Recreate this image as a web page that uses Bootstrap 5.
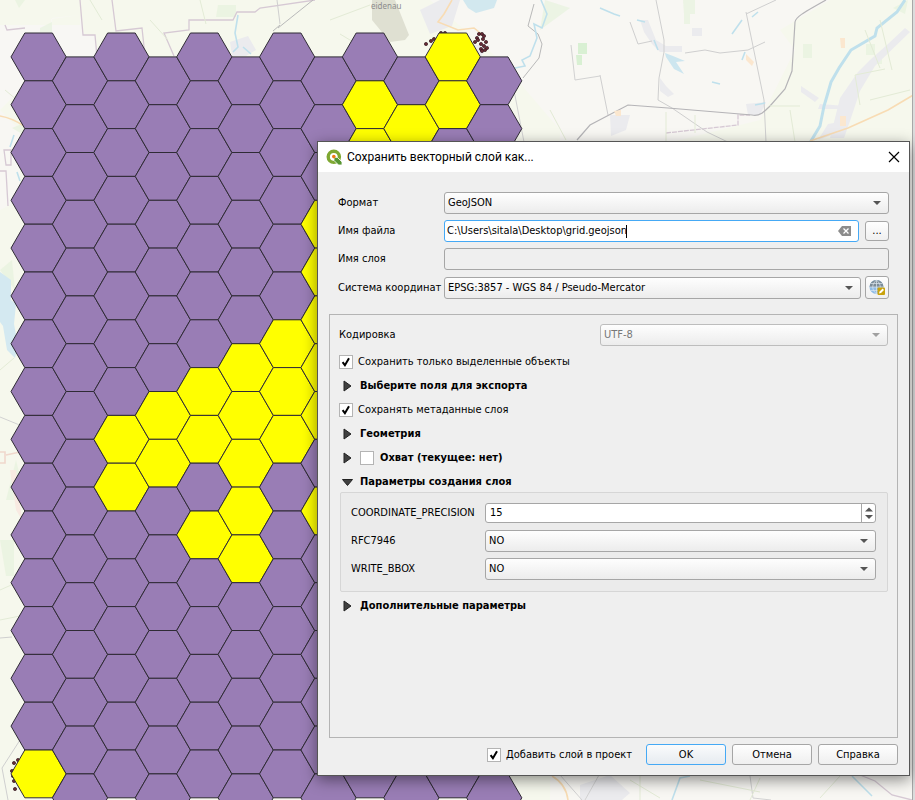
<!DOCTYPE html>
<html lang="ru">
<head>
<meta charset="utf-8">
<meta name="viewport" content="width=device-width, initial-scale=1">
<title>Сохранить векторный слой как...</title>
<link href="https://cdn.jsdelivr.net/npm/bootstrap@5.3.0/dist/css/bootstrap.min.css" rel="stylesheet">
<style>
  :root { --arrow: url("data:image/svg+xml,%3Csvg xmlns='http://www.w3.org/2000/svg' width='8' height='4'%3E%3Cpath d='M0 0h8L4 4z' fill='%23555'/%3E%3C/svg%3E"); }
  body { font-family: "DejaVu Sans Condensed", "DejaVu Sans", sans-serif; font-size: 11px; line-height: 16px; color: #000; background: #f8f7f3; }
  .desk { min-height: 100vh; }
  .map-canvas { position: absolute; inset: 0; width: 100%; height: 100%; }
  .map-edge { position: absolute; top: 0; right: 0; bottom: 0; width: 3px; background: #dcdcdc; border-left: 1px solid #a8a8a8; }
  .dialog { position: absolute; left: 317px; right: 5px; top: 141px; min-height: 635px; background: #efefef; border: 1px solid #555; box-shadow: 0 4px 14px rgba(0,0,0,.45); }
  .titlebar { height: 30px; background: #fff; font-family: Roboto, sans-serif; font-size: 12px; padding: 0 9px 0 8px; }
  .close-x { width: 12px; height: 12px; line-height: 0; }
  .form-zone { padding: 20px 20px 15px 20px; row-gap: 6px; }
  .lab { flex: 0 0 106px; }
  .plab { flex: 0 0 134px; }
  .ctl { height: 22px; min-height: 22px; padding: 2px 3px; font-size: 11px; line-height: 16px; color: #000; border: 1px solid #a6a6a6; border-radius: 3px; }
  .ctl:focus { box-shadow: none; }
  .form-select.ctl { background: var(--arrow) no-repeat right 7px center / 8px 4px, linear-gradient(#fefefe, #ececec); }
  .form-select.ctl:disabled { color: #777; opacity: 1; border-color: #bdbdbd; --arrow: url("data:image/svg+xml,%3Csvg xmlns='http://www.w3.org/2000/svg' width='8' height='4'%3E%3Cpath d='M0 0h8L4 4z' fill='%23a0a0a0'/%3E%3C/svg%3E"); }
  .form-control.ctl:disabled { background: #efefef; }
  .file-box { height: 22px; background: #fff; border: 1px solid #45a9f5; border-radius: 3px; padding: 0 7px 0 2px; }
  .file-box input { width: 179px; padding: 0; border: 0; outline: 0; font-size: 11px; line-height: 16px; background: none; }
  .caret { width: 1px; height: 13px; background: #000; }
  .tool { width: 24px; height: 23px; padding: 0; border: 1px solid #a6a6a6; border-radius: 3px; background: linear-gradient(#fefefe, #f0f0f0); font-size: 11px; line-height: 16px; }
  .tool-s { height: 20px; margin-left: 6px; }
  .group { margin: 0 11px; padding: 9px; border: 1px solid #b4b4b4; min-height: 423px; }
  .enc { width: 288px; }
  .fcheck { height: 24px; gap: 5px; }
  .fcheck .form-check-input, .fold .form-check-input { width: 14px; height: 14px; margin: 0; border: 1px solid #b4b4b4; border-radius: 0; background-color: #fff; box-shadow: none; flex: none; }
  .form-check-input:checked[type=checkbox] { background-image: url("data:image/svg+xml,%3Csvg xmlns='http://www.w3.org/2000/svg' viewBox='0 0 12 12'%3E%3Cpath d='M2.6 6.2L4.9 9.2L9 2.2' fill='none' stroke='%23000' stroke-width='2'/%3E%3C/svg%3E"); background-size: 12px 12px; }
  .fold { height: 24px; padding-left: 3px; font-weight: 700; }
  .fold button { width: 11px; height: 12px; line-height: 0; margin-right: 7px; }
  .fold .form-check-input { margin-right: 6px; }
  .params { margin: -2px 0 2px 1px; padding: 9px 11px 11px 10px; border: 1px solid #d6d6d6; border-radius: 2px; background: #ebebeb; row-gap: 6px; }
  .prow { min-height: 22px; }
  .spin-box { height: 20px; background: #fff; border: 1px solid #a6a6a6; border-radius: 3px; }
  .spin-box input { border: 0; outline: 0; padding: 0 4px; min-width: 0; font-size: 11px; line-height: 16px; background: none; appearance: textfield; }
  .spin-box input::-webkit-inner-spin-button { display: none; }
  .spin-btns { width: 14px; border-left: 1px solid #a6a6a6; }
  .spin-btns button { height: 9px; line-height: 0; }
  .footer-bar { padding: 6px 11px 10px; gap: 6px; }
  .footer-bar .fcheck { height: 21px; }
  .push { width: 80px; height: 21px; padding: 0; font-size: 11px; line-height: 16px; color: #000; border: 1px solid #a6a6a6; border-radius: 3px; background: linear-gradient(#fefefe, #efefef); }
  .push-main { border-color: #45a9f5; background: linear-gradient(#fafbfc, #e6ebf0); }
</style>
<script defer src="https://cdn.jsdelivr.net/npm/bootstrap@5.3.0/dist/js/bootstrap.bundle.min.js"></script>
</head>
<body>
<div class="desk position-relative overflow-hidden">
  <svg class="map-canvas" viewBox="0 0 915 800" preserveAspectRatio="xMinYMin slice" aria-label="Карта">
    <rect width="915" height="800" fill="#f8f7f3"/>
    <path d="M0 0H430L500 60L560 130L550 800H0V210L20 200V130L0 110ZM780 30L830 0H915V145H660L760 120L795 50Z" fill="#f6f8ed"/>
    <path d="M0 25H80V15L52 18V30L75 32L100 50L50 60L0 110ZM51 19L80 15L84 35L96 35V58H51Z" fill="#f8f7f4"/>
    <g fill="#e4f2da">
      <path d="M15 0h10l-6 8zM40 28l12-6v10H40zM218 5h18v12h-20zM683 0h12v14h-5v10h-6V14zM893 8l15-8-3 14zM803 44h9v14h-9zM866 44h9v11h-9zM876 56h6v8h-7zM12 128l12-5v12zM6 500h20l-10-40zM0 540h14v36H6zM545 0l25 8-30 22zM0 270l12-10 3 30z" opacity=".6"/>
      <path d="M578 43h9v11h-9zM576 55h6v10h-5z" fill="#d9f0d3"/>
    </g>
    <g fill="#ebebee">
      <path d="M230 42l18-6 8 14-10 6h-14zM420 10l20-10h20l-8 26-22 8zM438 45h52l-12 15h-38zM640 20l8 0 8 20 10 6h16v6h-22l-8-8-8-12zM660 78l6 8 8 8-6 3-8-6zM610 115l20 0-4 15-15 6zM692 28l10 0v8h-10zM746 104l20-2-6 13h-12zM870 60l18-16 17-16 5 4-35 34-15 25-10 30-6 17h-14l10-40 18-26z"/>
      <path d="M801 86l18 12-4 4-14-10zM820 104l26 2v3h-28zM818 140l10-16 18-3v6l-14 8zM580 785l30-10 20 18-8 7h-42z"/>
    </g>
    <path d="M372 0H395L409 35L405 40L390 42L372 20Z" fill="#dfe0d2"/>
    <path d="M463 0h34l-3 8-18 5-8-5z" fill="#d2e8ef"/>
    <path d="M0 272l11 8v20l5 4-2 20 4 22-3 12-8-8-4-24-3-4z" fill="#d4e9f1"/>
    <g fill="none" stroke="#d6c9d4" stroke-width="1.3">
      <path d="M5 25l2 5 18-2M80 0l3 35h12l2 22M112 0l4 31 26-3 3 28M174 56l-10-23 25-3V20h44l4-8h18l5-4 55-8M0 171h6l2 35M4 150h7v15h-5z"/>
      <path d="M666 133l72-8v-10h12" stroke-dasharray="5 1"/>
      <path d="M855 773l20 8 17 14 20 5"/>
    </g>
    <g fill="none" stroke="#cfcfcf">
      <path d="M656 0l8 40v12l-5 26-1 22 14 8 35 24 25 12M746 12l18 88 2 42M0 14M630 22l8 22 14-3M685 53l20-3 15 3 28-3 17-8M746 14l30-14M277 0l3 24M600 75l8 40M0 638l12-1M20 740l-18 28 6 32"/>
      <path d="M278 28l35-28M273 31l7-6M523 78l16-20 3-14-4-10-10-8 6-22" stroke="#b9b9b9"/>
      <path d="M577 140l13-15 38-20 40 3 84 7c8 2 14-5 18-9l15-17 7-18 3-49c1-5 6-8 31-22" stroke="#b5b4b7" stroke-width="1.2"/>
      <path d="M560 775l22 25M585 800l14-25M0 417l22 9M571 45l4 35 25-4M512 80l12 62M750 776l3 22 18 2" stroke="#d2d2d2"/>
    </g>
    <g fill="none" stroke="#bfe0ec" stroke-width="1.6">
      <path d="M238 15l-3 18 3 14-5 5M243 47l8 7M541 0l6 14-5 14-8-4 3 14-7 18-8 4 3 6-10 2M0 116M14 135l-4 12M17 172l3 9M600 8l14 6 6 2M637 20l8 2M654 40l4 10M742 20l-10 14M758 12l-6 5M745 52l-3 8M712 82l8 2M755 105l10-2M672 800l8-22 10-2M852 776l20 20"/>
      <path d="M905 0l-8 12-20 16-2 8-24 14-12 18-8 14-4 14-3 10-4 20-12 20" stroke-width="3"/>
    </g>
    <path d="M665 53l8 3 12 5-9 1 8 12-10-5-8-12z" fill="#cde6ef"/>
    <g fill="none" stroke="#f8dcb4" stroke-width="1.6">
      <path d="M0 116q12 2 24 10M810 141l38-13 40-18 27-16M452 0l-8 14-6 8 20 8 16-2 10 8M552 776q14 8 16 24"/>
      <path d="M0 452h5v11H0M6 455l14-3" stroke="#f0d8cc"/>
    </g>
    <path d="M840 38h5v10h-4zM746 54l8 8-2 4-6-6zM840 116h6v10h-6zM614 111l7-1v6h-5z" fill="#fbe7cf"/>
    <g fill="none" stroke="#e3ebd6" stroke-width="1">
      <path d="M90 0l12 20M200 0l6 24M150 20l18 20M330 20l40-15M340 34l20 12M855 75l30-6M855 75l5 30M865 30l15 38M880 20l12 50M870 100l40-10M790 110l5 32M666 112v30M695 115v18M770 106h30M550 110l16 30M630 780l30 18M640 775v25M700 780l60 12M760 778l-10 22M840 776l-20 22M0 370l14-12M5 90l12 10M0 590l18-8M0 620l20-4"/>
    </g>
    <path d="M10 470l6 0 6 50-6-10z" fill="#f8eae2"/>
    <text x="371" y="9" font-family="Noto Sans" font-size="8" fill="#8d8d8d">eidenau</text>
    <g id="dots" fill="#6b2c38" stroke="#30161d" stroke-width=".7"></g>
    <g id="hexes" stroke="#2f2b35" stroke-width="1"></g>
  </svg>
  <div class="map-edge"></div>

  <main class="dialog d-flex flex-column" role="dialog" aria-labelledby="dlgTitle">
    <header class="titlebar d-flex align-items-center">
      <svg width="17" height="17" viewBox="0 0 17 17" aria-hidden="true" class="me-1">
        <circle cx="7.800" cy="7.800" r="5.600" fill="none" stroke="#7fa832" stroke-width="3.400"/>
        <path d="M8 8l3.500 .5L16 13v3h-3.500L8 11.500z" fill="#589632" stroke="#fff" stroke-width=".8"/>
        <circle cx="7.800" cy="7.600" r="1.800" fill="#ee7913"/>
      </svg>
      <span id="dlgTitle" class="flex-grow-1">Сохранить векторный слой как...</span>
      <button type="button" class="close-x border-0 bg-transparent p-0" aria-label="Закрыть">
        <svg width="12" height="12" viewBox="0 0 12 12"><path d="M1 1l10 10M11 1L1 11" stroke="#000" stroke-width="1.200"/></svg>
      </button>
    </header>

    <div class="form-zone d-flex flex-column">
      <div class="d-flex align-items-center">
        <label class="lab" for="fmt">Формат</label>
        <select id="fmt" class="form-select ctl"><option>GeoJSON</option></select>
      </div>
      <div class="d-flex align-items-center">
        <label class="lab" for="file">Имя файла</label>
        <div class="file-box d-flex align-items-center flex-grow-1">
          <input id="file" type="text" value="C:\Users\sitala\Desktop\grid.geojson">
          <span class="caret"></span>
          <button type="button" class="border-0 bg-transparent p-0 ms-auto lh-1 d-flex" aria-label="Очистить">
            <svg width="13" height="10" viewBox="0 0 13 10"><path d="M4 0h9v10H4L0 5z" fill="#8c8c8c"/><path d="M5.500 2.500l5 5M10.500 2.500l-5 5" stroke="#fff" stroke-width="1.300"/></svg>
          </button>
        </div>
        <button type="button" class="tool tool-s">...</button>
      </div>
      <div class="d-flex align-items-center">
        <label class="lab" for="layer">Имя слоя</label>
        <input id="layer" type="text" class="form-control ctl" disabled>
      </div>
      <div class="d-flex align-items-center">
        <label class="lab" for="crs">Система координат</label>
        <select id="crs" class="form-select ctl"><option>EPSG:3857 - WGS 84 / Pseudo-Mercator</option></select>
        <button type="button" class="tool ms-1 flex-shrink-0 d-flex align-items-center justify-content-center" aria-label="Выбрать систему координат">
          <svg width="17" height="17" viewBox="0 0 17 17">
            <circle cx="7.500" cy="8" r="7" fill="#8fbbe6"/><path d="M.5 8a7 7 0 0 1 14 0z" fill="#7c8c98"/>
            <path d="M7.500 1v14M.5 8h14M1.500 4.500h12M1.500 11.500h12M7.500 1C2.500 5 2.500 11 7.500 15M7.500 1c5 4 5 10 0 14" fill="none" stroke="#dce6ee" stroke-width=".7"/>
            <rect x="8.500" y="8.500" width="7.500" height="7.500" rx="1" fill="#c9a20c"/><path d="M10 14.500l.6-2 3-3 1.400 1.400-3 3z" fill="#fff"/>
          </svg>
        </button>
      </div>
    </div>

    <section class="group flex-grow-1">
      <div class="d-flex align-items-center justify-content-between mb-1">
        <label for="enc">Кодировка</label>
        <select id="enc" class="form-select ctl enc" disabled><option>UTF-8</option></select>
      </div>
      <div class="fcheck d-flex align-items-center"><input id="c1" type="checkbox" class="form-check-input" checked><label for="c1">Сохранить только выделенные объекты</label></div>
      <div class="fold d-flex align-items-center"><button type="button" class="border-0 bg-transparent p-0" aria-label="Развернуть"><svg width="11" height="12" viewBox="0 0 11 12"><path d="M2 1v10l7-5z" fill="#404040" stroke="#222"/></svg></button><span>Выберите поля для экспорта</span></div>
      <div class="fcheck d-flex align-items-center"><input id="c2" type="checkbox" class="form-check-input" checked><label for="c2">Сохранять метаданные слоя</label></div>
      <div class="fold d-flex align-items-center"><button type="button" class="border-0 bg-transparent p-0" aria-label="Развернуть"><svg width="11" height="12" viewBox="0 0 11 12"><path d="M2 1v10l7-5z" fill="#404040" stroke="#222"/></svg></button><span>Геометрия</span></div>
      <div class="fold d-flex align-items-center"><button type="button" class="border-0 bg-transparent p-0" aria-label="Развернуть"><svg width="11" height="12" viewBox="0 0 11 12"><path d="M2 1v10l7-5z" fill="#404040" stroke="#222"/></svg></button><input id="c3" type="checkbox" class="form-check-input"><label for="c3">Охват (текущее: нет)</label></div>
      <div class="fold d-flex align-items-center"><button type="button" class="border-0 bg-transparent p-0" aria-label="Свернуть"><svg width="11" height="12" viewBox="0 0 11 12"><path d="M.5 3.500h10L5.500 9.500z" fill="#404040" stroke="#222"/></svg></button><span>Параметры создания слоя</span></div>
      <div class="params d-flex flex-column">
        <div class="prow d-flex align-items-center">
          <label class="plab" for="prec">COORDINATE_PRECISION</label>
          <div class="spin-box d-flex flex-grow-1 overflow-hidden">
            <input id="prec" type="number" class="flex-grow-1" value="15">
            <div class="spin-btns d-flex flex-column">
              <button type="button" class="border-0 bg-transparent p-0" aria-label="Больше"><svg width="8" height="9" viewBox="0 0 8 9"><path d="M0 7.500h8l-4-4z" fill="#555"/></svg></button>
              <button type="button" class="border-0 bg-transparent p-0" aria-label="Меньше"><svg width="8" height="9" viewBox="0 0 8 9"><path d="M0 2h8l-4 4z" fill="#555"/></svg></button>
            </div>
          </div>
        </div>
        <div class="prow d-flex align-items-center"><label class="plab" for="rfc">RFC7946</label><select id="rfc" class="form-select ctl"><option>NO</option></select></div>
        <div class="prow d-flex align-items-center"><label class="plab" for="bbox">WRITE_BBOX</label><select id="bbox" class="form-select ctl"><option>NO</option></select></div>
      </div>
      <div class="fold d-flex align-items-center"><button type="button" class="border-0 bg-transparent p-0" aria-label="Развернуть"><svg width="11" height="12" viewBox="0 0 11 12"><path d="M2 1v10l7-5z" fill="#404040" stroke="#222"/></svg></button><span>Дополнительные параметры</span></div>
    </section>

    <footer class="footer-bar d-flex align-items-center justify-content-end">
      <div class="fcheck d-flex align-items-center me-2"><input id="c4" type="checkbox" class="form-check-input" checked><label for="c4">Добавить слой в проект</label></div>
      <button type="button" class="push push-main">OK</button>
      <button type="button" class="push">Отмена</button>
      <button type="button" class="push">Справка</button>
    </footer>
  </main>
</div>
<script>
  const NS = 'http://www.w3.org/2000/svg';
  const selected = { 0: [15], 2: [8, 9], 3: [7, 8], 4: [7, 8, 10], 5: [6, 7, 8, 9, 10], 6: [6, 7, 8],
                     7: [3, 4, 5, 6, 7, 9], 8: [1, 2], 9: [1], 10: [0, 1] };
  const pitchX = 41.42, h = 47.8;
  const hexes = document.getElementById('hexes');
  for (let c = 0; c < 12; c++) {
    for (let r = 0; r < 16; r++) {
      const x = 11 + c * pitchX, y = 33 + r * h + (c % 2 ? h / 2 : 0);
      const p = document.createElementNS(NS, 'polygon');
      p.setAttribute('points', [[x, y + h / 2], [x + 13.8, y], [x + 41.4, y], [x + 55.2, y + h / 2], [x + 41.4, y + h], [x + 13.8, y + h]].join(' '));
      p.setAttribute('fill', (selected[c] || []).includes(r) ? '#ffff00' : '#997db5');
      hexes.appendChild(p);
    }
  }
  const pts = [[426, 44], [431, 41], [434, 39], [441, 33], [445, 33], [475, 42], [477, 38], [479, 34], [482, 34], [483, 39], [481, 44], [484, 46], [481, 49], [485, 50], [487, 48], [486, 42], [484, 36], [478, 40], [482, 51],
               [18, 760], [14, 763], [12, 771], [13, 776], [14, 781], [15, 789]];
  for (const [x, y] of pts) {
    const d = document.createElementNS(NS, 'circle');
    d.setAttribute('cx', x); d.setAttribute('cy', y); d.setAttribute('r', 1.6);
    document.getElementById('dots').appendChild(d);
  }
</script>
</body>
</html>
